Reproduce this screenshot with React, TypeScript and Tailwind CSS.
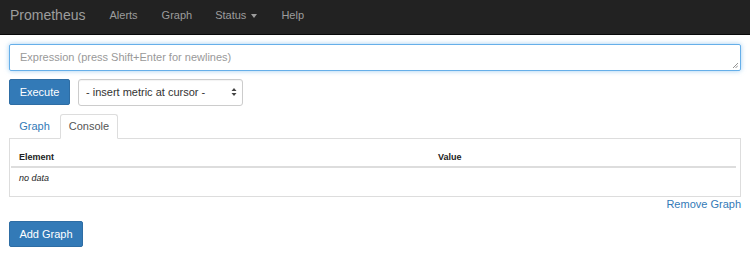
import React from "react";

export default function App() {
  return (
    <div className="w-[750px] h-[258px] bg-white text-[11px] text-[#333]" style={{ fontFamily: '"Liberation Sans", Arial, sans-serif' }}>
      <nav className="h-[35px] bg-[#222] border-b border-[#080808] flex items-center pb-[4px] text-[#9d9d9d]">
        <span className="ml-[10px] text-[14px] leading-none">Prometheus</span>
        <span className="ml-[24px]">Alerts</span>
        <span className="ml-[24px]">Graph</span>
        <span className="ml-[23px] flex items-center">
          Status
          <span className="ml-[5px] mt-px w-0 h-0 border-l-[3.5px] border-r-[3.5px] border-t-[4px] border-l-transparent border-r-transparent border-t-[#9d9d9d]" />
        </span>
        <span className="ml-[24px]">Help</span>
      </nav>

      <div className="px-[9px] pt-[9px]">
        <div className="relative h-[27px] border border-[#66afe9] rounded-[2px] shadow-[0_0_5px_rgba(102,175,233,0.6)] flex items-center px-[10px] text-[#999]">
          Expression (press Shift+Enter for newlines)
          <svg className="absolute right-[2px] bottom-[2px]" width="6" height="6" viewBox="0 0 6 6">
            <path d="M1 6 L6 1 M3.5 6 L6 3.5" stroke="#777" strokeWidth="0.8" />
          </svg>
        </div>

        <div className="flex items-center mt-[8px] h-[26px]">
          <div className="h-[26px] w-[61px] bg-[#337ab7] border border-[#2e6da4] rounded-[2px] text-white flex items-center justify-center">
            Execute
          </div>
          <div className="ml-[8px] h-[27px] w-[165px] border border-[#ccc] rounded-[3px] flex items-center justify-between pl-[7px] pr-[5px] text-[#333] shadow-[inset_0_1px_1px_rgba(0,0,0,0.05)]">
            <span>- insert metric at cursor -</span>
            <svg width="6" height="10" viewBox="0 0 6 10">
              <path d="M0.5 4 L3 1 L5.5 4 Z M0.5 6 L3 9 L5.5 6 Z" fill="#444" />
            </svg>
          </div>
        </div>

        <div className="mt-[9px] flex h-[25px] border-b border-[#ddd]">
          <div className="w-[51px] flex items-center justify-center text-[#337ab7]">Graph</div>
          <div className="w-[58px] -mb-px bg-white border border-[#ddd] border-b-white rounded-t-[3px] flex items-center justify-center text-[#555]">
            Console
          </div>
        </div>
        <div className="h-[58px] border border-t-0 border-[#ddd] pt-[11px] text-[9px] text-[#222]">
          <div className="ml-px mr-[4px] flex border-b-2 border-[#ddd] h-[18px] items-center font-bold">
            <div className="w-[427px] pl-[8px]">Element</div>
            <div>Value</div>
          </div>
          <div className="ml-px mr-[4px] h-[22px] flex items-center pl-[8px] italic">no data</div>
        </div>

        <div className="flex justify-end text-[#337ab7] h-[15px] items-center">Remove Graph</div>

        <div className="mt-[9px] h-[26px] w-[74px] bg-[#337ab7] border border-[#2e6da4] rounded-[2px] text-white flex items-center justify-center">
          Add Graph
        </div>
      </div>
    </div>
  );
}
